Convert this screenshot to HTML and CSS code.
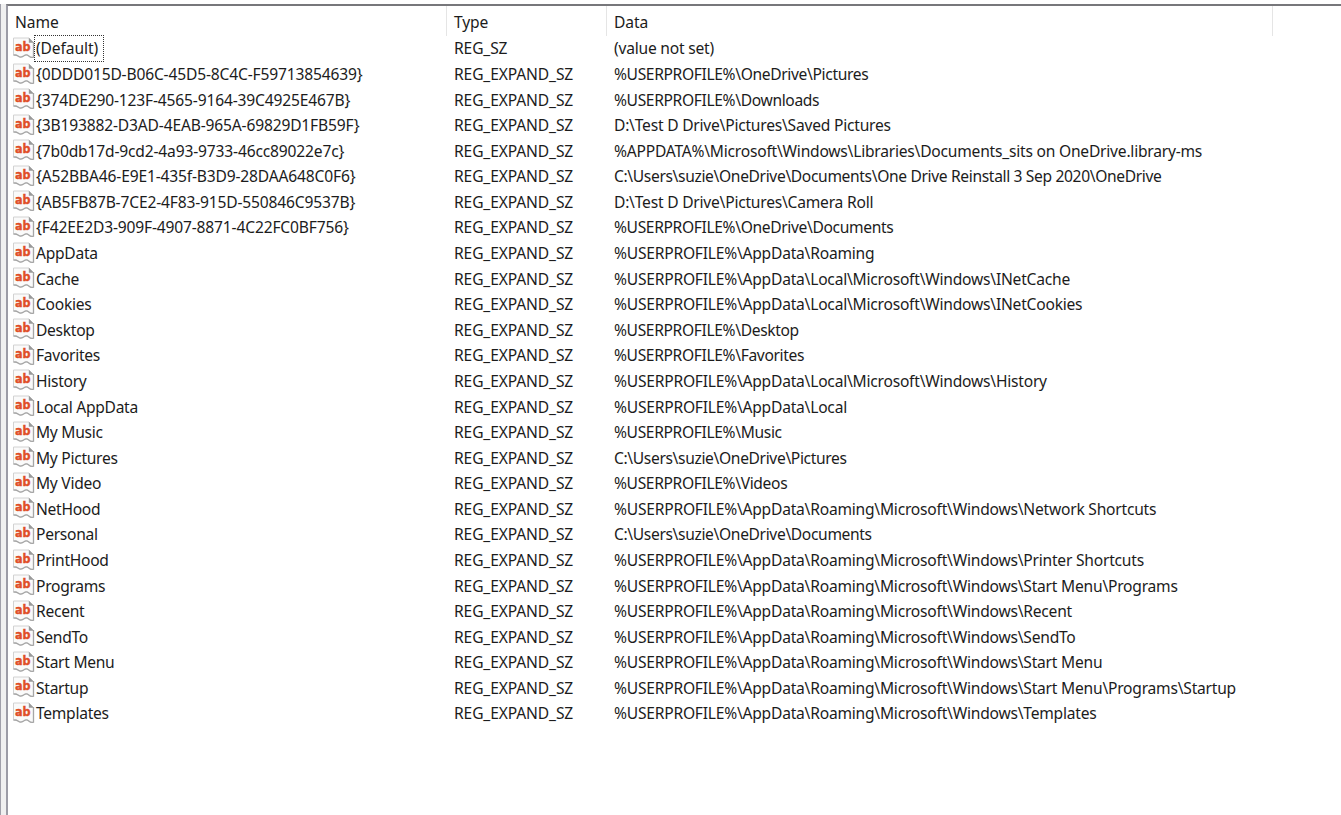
FILE: index.html
```html
<!DOCTYPE html>
<html lang="en">
<head>
    <meta charset="UTF-8">
    <meta name="viewport" content="width=device-width, initial-scale=1.0">
    <title>Registry Editor - User Shell Folders</title>
    <link rel="stylesheet" href="styles.css">
</head>
<body>
    <div class="splitter"></div>
    <div class="list-view">
        <table id="value-table">
            <colgroup>
                <col class="col-name">
                <col class="col-type">
                <col class="col-data">
                <col>
            </colgroup>
            <thead>
                <tr>
                    <th>Name</th>
                    <th>Type</th>
                    <th>Data</th>
                    <th></th>
                </tr>
            </thead>
            <tbody id="value-rows"></tbody>
        </table>
    </div>

    <script src="values.js"></script>
</body>
</html>
```
FILE: styles.css
```css
* {
    box-sizing: border-box;
}

body {
    display: flex;
    height: 815px;
    margin: 0;
    padding-top: 4px;
    overflow: hidden;
    background-color: #fff;
    color: #1c1c1c;
    font-family: 'Noto Sans', 'Open Sans', sans-serif;
    font-size: 15.6px;
}

.splitter {
    width: 6px;
    border-left: 1px solid #a0a0aa;
    background-color: #f0f0f0;
}

.list-view {
    flex: 1;
    border-top: 2px solid #77777b;
    border-left: 2px solid #9c9ca6;
}

table {
    width: 100%;
    table-layout: fixed;
    border-collapse: separate;
    border-spacing: 0;
}

.col-name {
    width: 439px;
}

.col-type {
    width: 160px;
}

.col-data {
    width: 666px;
}

th, td {
    padding: 0 0 0 7px;
    text-align: left;
    font-weight: normal;
    white-space: nowrap;
}

th {
    height: 30px;
    padding-top: 2px;
    border-right: 1px solid #e5e5e5;
    letter-spacing: -0.1px;
}

th:last-child {
    border-right: none;
}

td {
    height: 25.58px;
    padding-top: 0.3px;
    line-height: 25px;
}

td:first-child {
    padding-left: 5px;
}

.value-name {
    display: flex;
    align-items: center;
    height: 25px;
    letter-spacing: -0.28px;
}

.value-name svg {
    width: 22px;
    height: 22px;
    margin-top: -2px;
}

.value-name span {
    padding: 0 2px 0 1px;
}

.value-name .guid {
    letter-spacing: -0.17px;
}

.value-type {
    letter-spacing: -0.12px;
}

.value-data {
    letter-spacing: -0.22px;
}

.value-data.short-path {
    letter-spacing: -0.35px;
}

.icon-text {
    fill: #e04e28;
    stroke: #e04e28;
    stroke-width: 0.4px;
    font-family: 'DejaVu Sans', sans-serif;
    font-size: 13px;
    font-weight: bold;
    letter-spacing: 0;
}

.value-name .focused {
    padding-right: 5px;
    outline: 1px dotted #333;
    letter-spacing: -0.1px;
}
```
FILE: values.js
```javascript
const values = [
    ['(Default)', 'REG_SZ', '(value not set)'],
    ['{0DDD015D-B06C-45D5-8C4C-F59713854639}', 'REG_EXPAND_SZ', '%USERPROFILE%\\OneDrive\\Pictures'],
    ['{374DE290-123F-4565-9164-39C4925E467B}', 'REG_EXPAND_SZ', '%USERPROFILE%\\Downloads'],
    ['{3B193882-D3AD-4EAB-965A-69829D1FB59F}', 'REG_EXPAND_SZ', 'D:\\Test D Drive\\Pictures\\Saved Pictures'],
    ['{7b0db17d-9cd2-4a93-9733-46cc89022e7c}', 'REG_EXPAND_SZ', '%APPDATA%\\Microsoft\\Windows\\Libraries\\Documents_sits on OneDrive.library-ms'],
    ['{A52BBA46-E9E1-435f-B3D9-28DAA648C0F6}', 'REG_EXPAND_SZ', 'C:\\Users\\suzie\\OneDrive\\Documents\\One Drive Reinstall 3 Sep 2020\\OneDrive'],
    ['{AB5FB87B-7CE2-4F83-915D-550846C9537B}', 'REG_EXPAND_SZ', 'D:\\Test D Drive\\Pictures\\Camera Roll'],
    ['{F42EE2D3-909F-4907-8871-4C22FC0BF756}', 'REG_EXPAND_SZ', '%USERPROFILE%\\OneDrive\\Documents'],
    ['AppData', 'REG_EXPAND_SZ', '%USERPROFILE%\\AppData\\Roaming'],
    ['Cache', 'REG_EXPAND_SZ', '%USERPROFILE%\\AppData\\Local\\Microsoft\\Windows\\INetCache'],
    ['Cookies', 'REG_EXPAND_SZ', '%USERPROFILE%\\AppData\\Local\\Microsoft\\Windows\\INetCookies'],
    ['Desktop', 'REG_EXPAND_SZ', '%USERPROFILE%\\Desktop'],
    ['Favorites', 'REG_EXPAND_SZ', '%USERPROFILE%\\Favorites'],
    ['History', 'REG_EXPAND_SZ', '%USERPROFILE%\\AppData\\Local\\Microsoft\\Windows\\History'],
    ['Local AppData', 'REG_EXPAND_SZ', '%USERPROFILE%\\AppData\\Local'],
    ['My Music', 'REG_EXPAND_SZ', '%USERPROFILE%\\Music'],
    ['My Pictures', 'REG_EXPAND_SZ', 'C:\\Users\\suzie\\OneDrive\\Pictures'],
    ['My Video', 'REG_EXPAND_SZ', '%USERPROFILE%\\Videos'],
    ['NetHood', 'REG_EXPAND_SZ', '%USERPROFILE%\\AppData\\Roaming\\Microsoft\\Windows\\Network Shortcuts'],
    ['Personal', 'REG_EXPAND_SZ', 'C:\\Users\\suzie\\OneDrive\\Documents'],
    ['PrintHood', 'REG_EXPAND_SZ', '%USERPROFILE%\\AppData\\Roaming\\Microsoft\\Windows\\Printer Shortcuts'],
    ['Programs', 'REG_EXPAND_SZ', '%USERPROFILE%\\AppData\\Roaming\\Microsoft\\Windows\\Start Menu\\Programs'],
    ['Recent', 'REG_EXPAND_SZ', '%USERPROFILE%\\AppData\\Roaming\\Microsoft\\Windows\\Recent'],
    ['SendTo', 'REG_EXPAND_SZ', '%USERPROFILE%\\AppData\\Roaming\\Microsoft\\Windows\\SendTo'],
    ['Start Menu', 'REG_EXPAND_SZ', '%USERPROFILE%\\AppData\\Roaming\\Microsoft\\Windows\\Start Menu'],
    ['Startup', 'REG_EXPAND_SZ', '%USERPROFILE%\\AppData\\Roaming\\Microsoft\\Windows\\Start Menu\\Programs\\Startup'],
    ['Templates', 'REG_EXPAND_SZ', '%USERPROFILE%\\AppData\\Roaming\\Microsoft\\Windows\\Templates']
];

// String value icon: torn page with a folded corner
const stringIcon = `
    <svg viewBox="0 0 22 22">
        <path d="M0.5 1H16L20.5 5.5V20.2C18.8 20.8 17.3 20.4 15.8 19C14.2 17.6 12.6 17.4 11 18.8C9 20.4 6.8 20.4 5 19C3.6 18 2.2 17.8 0.5 18.2Z" fill="#fafafa" stroke="#d2d2d2"/>
        <path d="M20.5 5V20.2C18.8 20.8 17.3 20.4 15.8 19C14.2 17.6 12.6 17.4 11 18.8C9 20.4 6.8 20.4 5 19C3.6 18 2.2 17.8 0.5 18.2" fill="none" stroke="#a6a6a6" stroke-width="1.3"/>
        <path d="M15.8 0.8L20.8 5.8H15.8Z" fill="#999"/>
        <text class="icon-text" x="2" y="13.8" textLength="15.6" lengthAdjust="spacingAndGlyphs">ab</text>
    </svg>
`;

const rows = document.getElementById('value-rows');

values.forEach(([name, type, data], index) => {
    const nameClass = index === 0 ? 'focused' : name.startsWith('{') ? 'guid' : '';
    const dataClass = /^(%USERPROFILE%|C:)(?!\\AppData)/.test(data) ? 'short-path' : '';

    const row = document.createElement('tr');
    row.innerHTML = `
        <td>
            <div class="value-name">
                ${stringIcon}
                <span class="${nameClass}">${name}</span>
            </div>
        </td>
        <td class="value-type">${type}</td>
        <td class="value-data ${dataClass}">${data}</td>
        <td></td>
    `;
    rows.appendChild(row);
});
```
